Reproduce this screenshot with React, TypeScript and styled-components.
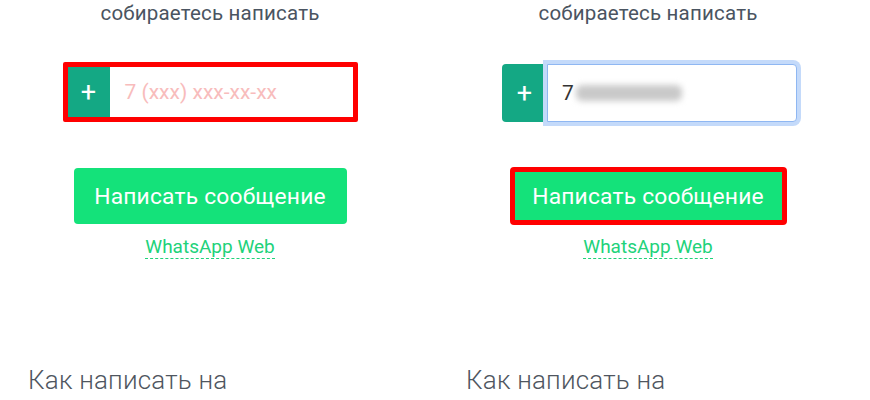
import { FC } from 'react';
import styled, { createGlobalStyle } from 'styled-components';

const GlobalStyle = createGlobalStyle`
  html, body {
    margin: 0;
    padding: 0;
    background: #ffffff;
  }
  body {
    font-family: Roboto, 'Liberation Sans', Arial, sans-serif;
    overflow: hidden;
  }
`;

type PanelProps = {
  highlight: 'input' | 'button';
};

const Panel: FC<PanelProps> = ({ highlight }) => {
  const inputMarked = highlight === 'input';
  return (
    <Column>
      <Lead>собираетесь написать</Lead>
      <Phone $marked={inputMarked}>
        <Addon $marked={inputMarked}>+</Addon>
        {inputMarked ? (
          <Field $focused={false}>
            <Placeholder>7 (xxx) xxx-xx-xx</Placeholder>
          </Field>
        ) : (
          <Field $focused>
            <Typed>7</Typed>
            <Blur />
          </Field>
        )}
      </Phone>
      <SendButton $marked={!inputMarked}>Написать сообщение</SendButton>
      <WebLink href="#">WhatsApp Web</WebLink>
      <Heading>Как написать на</Heading>
    </Column>
  );
};

export default function App() {
  return (
    <>
      <GlobalStyle />
      <Page>
        <Panel highlight="input" />
        <Panel highlight="button" />
      </Page>
    </>
  );
}

const Page = styled.div`
  display: grid;
  grid-template-columns: 420px 420px;
  column-gap: 18px;
  width: 870px;
  height: 400px;
`;

const Column = styled.div`
  display: flex;
  flex-direction: column;
  align-items: center;
`;

const Lead = styled.p`
  margin: 0;
  padding-top: 1px;
  font-size: 20.5px;
  line-height: 24px;
  color: #4a5461;
  letter-spacing: 0.2px;
`;

const Phone = styled.div<{ $marked: boolean }>`
  display: flex;
  box-sizing: border-box;
  width: 295px;
  height: ${({ $marked }) => ($marked ? '60px' : '58px')};
  margin-top: ${({ $marked }) => ($marked ? '37px' : '39px')};
  margin-left: ${({ $marked }) => ($marked ? '0' : '3px')};
  border: ${({ $marked }) => ($marked ? '5px solid #ff0000' : 'none')};
  border-radius: ${({ $marked }) => ($marked ? '2px' : '0')};
  background: #ffffff;
`;

const Addon = styled.span<{ $marked: boolean }>`
  display: flex;
  align-items: center;
  justify-content: center;
  flex: 0 0 ${({ $marked }) => ($marked ? '42px' : '45px')};
  background: #14a884;
  color: #ffffff;
  font-size: 27px;
  font-weight: 400;
  border-radius: ${({ $marked }) => ($marked ? '0' : '4px 0 0 4px')};
`;

const Field = styled.div<{ $focused: boolean }>`
  flex: 1;
  display: flex;
  align-items: center;
  box-sizing: border-box;
  padding-left: ${({ $focused }) => ($focused ? '14px' : '15px')};
  background: #ffffff;
  border: ${({ $focused }) => ($focused ? '1px solid #8fb7f2' : 'none')};
  border-radius: ${({ $focused }) => ($focused ? '0 4px 4px 0' : '0')};
  box-shadow: ${({ $focused }) => ($focused ? '0 0 0 4px #c4dafa' : 'none')};
`;

const Placeholder = styled.span`
  font-size: 21px;
  color: #f8bcbc;
`;

const Typed = styled.span`
  font-size: 21px;
  color: #333333;
`;

const Blur = styled.span`
  width: 106px;
  height: 16px;
  margin-left: 2px;
  background: #c9c9c9;
  border-radius: 6px;
  filter: blur(3px);
`;

const SendButton = styled.button<{ $marked: boolean }>`
  box-sizing: border-box;
  width: ${({ $marked }) => ($marked ? '277px' : '273px')};
  height: ${({ $marked }) => ($marked ? '58px' : '56px')};
  margin-top: ${({ $marked }) => ($marked ? '45px' : '46px')};
  margin-bottom: ${({ $marked }) => ($marked ? '-1px' : '0')};
  padding: 0;
  border: ${({ $marked }) => ($marked ? '5px solid #ff0000' : 'none')};
  border-radius: 4px;
  background: #14e27a;
  color: #ffffff;
  font-family: inherit;
  font-size: 22.8px;
  letter-spacing: 0.2px;
  cursor: pointer;
`;

const WebLink = styled.a`
  margin-top: 12px;
  font-size: 19px;
  line-height: 22px;
  color: #21d27a;
  text-decoration: none;
  border-bottom: 1px dashed #21d27a;
`;

const Heading = styled.h2`
  align-self: flex-start;
  margin: 106px 0 0 28px;
  font-size: 26px;
  font-weight: 300;
  line-height: 30px;
  color: #4f5660;
  letter-spacing: 0.2px;
`;
